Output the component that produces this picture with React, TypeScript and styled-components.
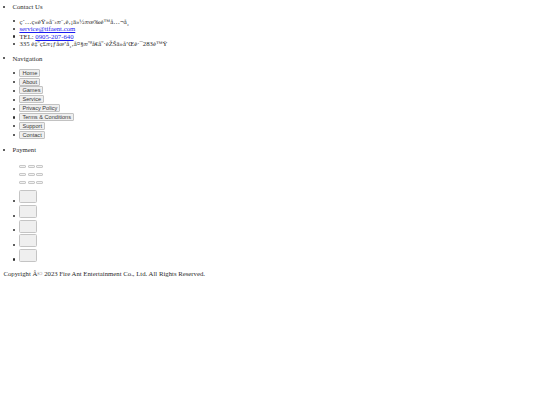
import React from "react";
import styled, { createGlobalStyle } from "styled-components";

// the reference is a zoomed-out capture, so every size here is ~0.42 of the usual
const GlobalStyle = createGlobalStyle`
  body {
    margin: 3.4px;
    background: #fff;
    color: #2b2b2b;
    font-family: "Liberation Serif", "Times New Roman", serif;
    font-size: 6.75px;
    line-height: 7.6px;
  }
`;

// utf-8 bytes shown as windows-1252, like the original page (c1 controls draw nothing)
const mojibake = (text: string) =>
  new TextDecoder("windows-1252")
    .decode(new TextEncoder().encode(text))
    .replace(/[\u0080-\u009f]/g, "");

const navLinks = [
  "Home",
  "About",
  "Games",
  "Service",
  "Privacy Policy",
  "Terms & Conditions",
  "Support",
  "Contact",
];

const Footer = styled.footer`
  display: block;
`;

const SectionList = styled.ul`
  margin: 0;
  padding-left: 9px;
  list-style: none;
`;

// the default disc markers sit too far out at this size, so draw them
const Section = styled.li`
  position: relative;

  &::before {
    content: "";
    position: absolute;
    left: -9.2px;
    top: 2.7px;
    width: 2.2px;
    height: 2.2px;
    border-radius: 50%;
    background: #2b2b2b;
  }
`;

const SubList = styled.ul`
  margin: 6.6px 0;
  padding-left: 7px;
  list-style: none;
`;

const Item = styled.li<{ $dotTop?: number; $height?: number }>`
  position: relative;
  ${(p) => (p.$height ? `height: ${p.$height}px;` : "")}

  &::before {
    content: "";
    position: absolute;
    left: -6.5px;
    top: ${(p) => p.$dotTop ?? 2.7}px;
    width: 2.2px;
    height: 2.2px;
    border-radius: 50%;
    background: #2b2b2b;
  }
`;

const Link = styled.a`
  color: #1a1aee;
  text-decoration: underline;
`;

const NavButton = styled.button`
  box-sizing: border-box;
  vertical-align: top;
  height: 8px;
  margin: 0;
  padding: 0 2px;
  border: 1px solid #c2c2c2;
  border-radius: 1px;
  background: #efefef;
  color: #3a3a3a;
  font-family: "Liberation Sans", Arial, sans-serif;
  font-size: 5.625px;
  line-height: 6px;
`;

const PillGrid = styled.div`
  margin-top: 6.6px;
  padding-left: 7px;
`;

const PillRow = styled.div`
  display: flex;
  align-items: flex-end;
  gap: 1.2px;
  height: 7.8px;
`;

const Pill = styled.span`
  box-sizing: border-box;
  width: 7px;
  height: 3px;
  border: 1px solid #c8c8c8;
  border-radius: 1px;
  background: #f3f3f3;
`;

const LogoBox = styled.span`
  display: inline-block;
  box-sizing: border-box;
  width: 18px;
  height: 13px;
  border: 1px solid #c4c4c4;
  border-radius: 1.5px;
  background: #efefef;
`;

const Copyright = styled.p`
  margin: 6.75px 0;
`;

const App = () => {
  return (
    <Footer>
      <GlobalStyle />
      <SectionList>
        <Section>
          Contact Us
          <SubList>
            <Item>{mojibake("紅火蟻娛樂股份有限公司")}</Item>
            <Item>
              <Link href="#">service@tifaent.com</Link>
            </Item>
            <Item>
              TEL: <Link href="#">0905-207-640</Link>
            </Item>
            <Item>335 {mojibake("臺灣桃園市大溪區康莊仁和路")}283{mojibake("號")}</Item>
          </SubList>
        </Section>
        <Section>
          Navigation
          <SubList>
            {navLinks.map((label) => (
              <Item key={label} $height={8.86} $dotTop={3.4}>
                <NavButton type="button">{label}</NavButton>
              </Item>
            ))}
          </SubList>
        </Section>
        <Section>
          Payment
          <PillGrid>
            {[0, 1, 2].map((row) => (
              <PillRow key={row}>
                <Pill />
                <Pill />
                <Pill />
              </PillRow>
            ))}
          </PillGrid>
          <SubList>
            {[0, 1, 2, 3, 4].map((i) => (
              <Item key={i} $dotTop={9.6}>
                <LogoBox />
              </Item>
            ))}
          </SubList>
        </Section>
      </SectionList>
      <Copyright>Copyright Â© 2023 Fire Ant Entertainment Co., Ltd. All Rights Reserved.</Copyright>
    </Footer>
  );
};

export default App;
